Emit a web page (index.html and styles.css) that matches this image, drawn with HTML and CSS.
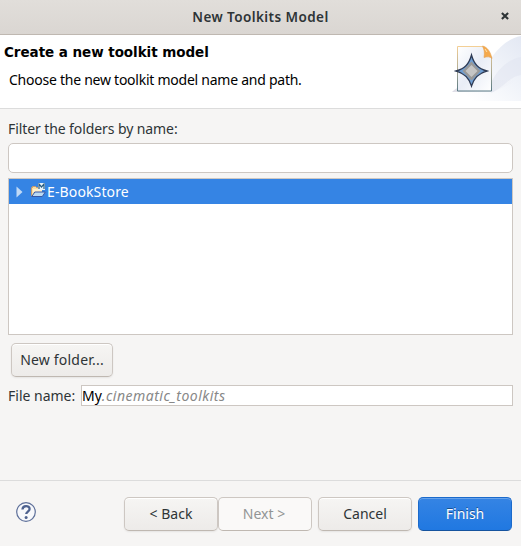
FILE: index.html
```html
<!DOCTYPE html>
<html lang="en">
<head>
<meta charset="utf-8">
<title>New Toolkits Model</title>
<link rel="stylesheet" href="styles.css">
</head>
<body>
<div class="dialog">
  <header class="titlebar">
    <span class="title">New Toolkits Model</span>
    <svg class="close" width="8" height="8" viewBox="0 0 8 8"><path d="M.9.9l6.2 6.2M7.1.9L.9 7.1" stroke="#2e3436" stroke-width="2.1"/></svg>
  </header>
  <section class="banner">
    <div class="banner-text">
      <h1><span class="t-head">Create a new toolkit model</span></h1>
      <p><span class="t-sub">Choose the new toolkit model name and path.</span></p>
    </div>
    <svg class="banner-art" width="76" height="66" viewBox="0 0 76 66">
      <defs>
        <linearGradient id="sky" x1="0" y1="1" x2="1" y2="0"><stop offset=".15" stop-color="#fff"/><stop offset=".6" stop-color="#f0f3f9"/><stop offset="1" stop-color="#e3e8f3"/></linearGradient>
        <linearGradient id="page" x1="0" y1="0" x2="1" y2="1"><stop stop-color="#fff"/><stop offset=".5" stop-color="#e9edf6"/><stop offset="1" stop-color="#fff"/></linearGradient>
        <linearGradient id="edge" x1="0" y1="0" x2="0" y2="1"><stop stop-color="#f3cf95"/><stop offset=".5" stop-color="#b3ad94"/><stop offset="1" stop-color="#587984"/></linearGradient>
        <linearGradient id="shade" x1="0" y1="0" x2="1" y2="0"><stop stop-color="#c6c5d3"/><stop offset="1" stop-color="#e8e8f2" stop-opacity="0"/></linearGradient>
      </defs>
      <path d="M5 66C35 62 40 8 76 1v65z" fill="url(#sky)"/>
      <path d="M46 48C52 35 63 24 76 22v18c-11 1-17 12-30 18z" fill="#dfe3ef" opacity=".5"/>
      <path d="M47 45h23q3 0 0 2L48 57H7q4-4 6-4h34z" fill="url(#shade)" opacity=".6"/>
      <path d="M12.500 11.500h25l9 11v33.500h-34z" fill="url(#page)" stroke="url(#edge)"/>
      <path d="M37.500 11c5 1 8 6 9.500 12.500-2-2-5-2-8-1 1-5 0-8.500-1.500-11.500z" fill="#f5a94c" stroke="#e3a052" stroke-width=".6"/>
      <path d="M40 14l2 3" stroke="#ffe1ac"/>
      <path d="M26.500 20C29 29 33 33.500 42 36C33 38.500 29 43 26.500 51C24 43 20 38.500 11 36C20 33.500 24 29 26.500 20z" fill="#6f9fd4" stroke="#303c55" stroke-width="1.300"/>
      <path d="M26.500 26.500l9 9.500-9 9.500-9-9.500z" fill="#999"/>
      <path d="M26.500 30l6 6-6 6-6-6z" fill="#c5c5c5"/>
    </svg>
  </section>
  <main class="content">
    <label class="filter-label"><span class="t-filter">Filter the folders by name:</span></label>
    <div class="filter-input"></div>
    <div class="tree">
      <div class="row">
        <svg class="arrow" width="7" height="12" viewBox="0 0 7 12"><path d="M.5.500L6.500 6l-6 5.500z" fill="#c0d9f6"/></svg>
        <svg class="folder" width="17" height="16" viewBox="0 0 17 16">
          <path d="M1.500 12.500v-8h1v-1h3l1 1h5v8z" fill="#f9dfa5" stroke="#c69a6b"/>
          <path d="M3 6h9v3H3z" fill="#fff0c9"/>
          <path d="M1.800 13.500l3-4.500h10.500l-3 4.500z" fill="#b9d9f3" stroke="#3657a4"/>
          <path d="M8 0h7v7H8z" fill="#e7f1f9"/>
          <path d="M9 6V1l2.500 3L14 1v5" fill="none" stroke="#285d83" stroke-width="1.200"/>
        </svg>
        <span class="t-store">E-BookStore</span>
      </div>
    </div>
    <div class="button new-folder"><span class="t-new">New folder...</span></div>
    <div class="file-row">
      <label><span class="t-file">File name:</span></label>
      <div class="file-input"><span class="t-my">My</span><em class="t-ext">.cinematic_toolkits</em></div>
    </div>
  </main>
  <footer class="footer">
    <svg class="help" width="20" height="20" viewBox="0 0 20 20"><circle cx="10" cy="10" r="9.300" fill="#f7f8fb" stroke="#5d6f99" stroke-width="1.200"/><path d="M6.500 7.500C6.500 3 13.600 3 13.600 6.900c0 2.600-3.400 2.700-3.400 5.200" fill="none" stroke="#4e628f" stroke-width="2.300"/><circle cx="10.100" cy="15.400" r="1.500" fill="#4e628f"/></svg>
    <div class="button back"><span class="t-back">&lt; Back</span></div>
    <div class="button next"><span class="t-next">Next &gt;</span></div>
    <div class="button cancel"><span class="t-cancel">Cancel</span></div>
    <div class="button finish"><span class="t-finish">Finish</span></div>
  </footer>
</div>
</body>
</html>
```
FILE: styles.css
```css
* { box-sizing: border-box; }
body { margin: 0; background: #f6f5f4; color: #2e3436; font: 14px/20px "Noto Sans", sans-serif; }
h1, p { margin: 0; }
span, em { white-space: nowrap; }
svg { display: block; flex: none; }
.dialog { width: 521px; height: 546px; display: flex; flex-direction: column; overflow: hidden; }
.titlebar { height: 35px; flex: none; display: grid; grid-template-columns: 1fr auto 1fr; align-items: center; padding: 0 12px 2px; background: linear-gradient(#e1deda, #dad6d2); border-bottom: 1px solid #bfb8b1; }
.title { grid-column: 2; font-weight: 600; font-size: 13.5px; letter-spacing: .42px; padding-top: 1px; }
.close { justify-self: end; }
.banner { height: 74px; flex: none; display: flex; justify-content: space-between; background: #fff; border-bottom: 1px solid #dcdcdc; color: #000; }
.banner-text { padding: 7px 0 0 4px; }
h1 { font: bold 13.5px/20px "DejaVu Sans", sans-serif; letter-spacing: -.05px; }
.banner p { padding: 8px 0 0 5px; }
.t-sub { letter-spacing: -.25px; }
.content { flex: 1; padding: 10px 8px 0; display: flex; flex-direction: column; }
.filter-label { height: 24px; }
.t-filter { letter-spacing: -.09px; }
.filter-input { height: 30px; border: 1px solid #cdc7c2; border-radius: 5px; background: #fff; }
.tree { height: 157px; margin-top: 5px; border: 1px solid #cdc7c2; background: #fff; }
.row { height: 25px; display: flex; align-items: center; background: #3584e4; color: #fff; }
.t-store { letter-spacing: .13px; }
.arrow { margin-left: 7px; }
.folder { margin: -2px 0 0 7px; }
.button { height: 34px; display: flex; align-items: center; justify-content: center; border: 1px solid #cdc7c2; border-bottom-color: #bfb8b1; border-radius: 5px; background: linear-gradient(#f6f5f3, #edebe9); box-shadow: inset 0 1px #fff, 0 1px 2px rgba(0,0,0,.07); }
.new-folder { width: 102px; margin: 8px 0 0 3px; }
.t-new { letter-spacing: .2px; }
.file-row { display: flex; align-items: center; margin-top: 8px; }
.file-row label { width: 73px; }
.file-input { flex: 1; height: 21px; display: flex; align-items: center; border: 1px solid #cdc7c2; background: #fff; color: #000; }
.t-ext { color: #888; letter-spacing: .5px; }
.footer { height: 66px; flex: none; display: flex; padding: 16px 9px 0 16px; border-top: 1px solid #dcdcdc; }
.footer .button { width: 94px; }
.help { margin: 5px 88px 0 0; }
.footer .next { background: #faf9f8; color: #929595; box-shadow: none; padding-right: 2px; }
.cancel { margin-left: 6px; }
.finish { margin-left: 6px; }
.footer .finish { background: linear-gradient(#3584e4, #2078e1); border-color: #1b6acb; border-bottom-color: #15539e; color: #fff; text-shadow: 0 -1px rgba(0,0,0,.4); box-shadow: inset 0 1px rgba(255,255,255,.25); }
```
